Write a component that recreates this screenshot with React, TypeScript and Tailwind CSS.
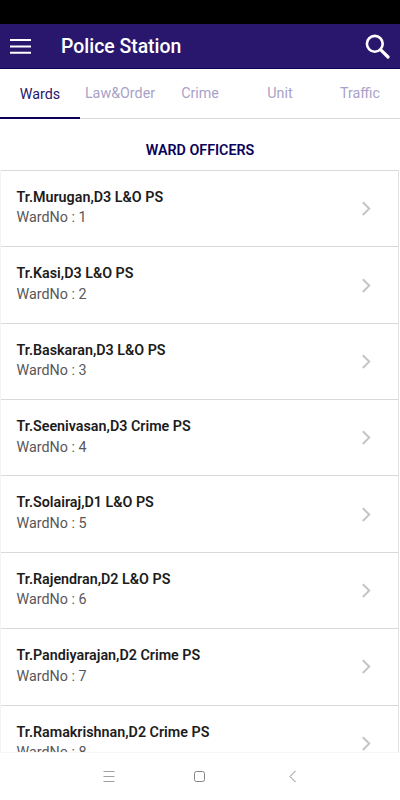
import React from 'react';
import { clsx } from 'clsx';

interface Officer {
  name: string;
  station: string;
  ward: number;
}

const tabs = ['Wards', 'Law&Order', 'Crime', 'Unit', 'Traffic'];

const officers: Officer[] = [
  { name: 'Tr.Murugan', station: 'D3 L&O PS', ward: 1 },
  { name: 'Tr.Kasi', station: 'D3 L&O PS', ward: 2 },
  { name: 'Tr.Baskaran', station: 'D3 L&O PS', ward: 3 },
  { name: 'Tr.Seenivasan', station: 'D3 Crime PS', ward: 4 },
  { name: 'Tr.Solairaj', station: 'D1 L&O PS', ward: 5 },
  { name: 'Tr.Rajendran', station: 'D2 L&O PS', ward: 6 },
  { name: 'Tr.Pandiyarajan', station: 'D2 Crime PS', ward: 7 },
  { name: 'Tr.Ramakrishnan', station: 'D2 Crime PS', ward: 8 },
];

const Header: React.FC = () => (
  <header className="flex h-[45px] shrink-0 items-center border-b border-[#0a0058] bg-[#29176e] pl-[10px] pr-[9px] text-white">
    <button aria-label="Menu" className="pt-px">
      <svg className="block h-[15px] w-[21px]" viewBox="0 0 21 15" fill="currentColor">
        <path d="M0 0h21v2H0zM0 6.4h21v2H0zM0 12.8h21v2H0z" />
      </svg>
    </button>
    <h1 className="ml-[30px] flex-1 pt-px text-[19.4px] font-medium leading-6">Police Station</h1>
    <button aria-label="Search">
      <svg className="block h-[26px] w-[26px]" viewBox="0 0 26 26" fill="none" stroke="currentColor">
        <circle cx="9.8" cy="10.8" r="7.9" strokeWidth="2.6" />
        <path d="M15.8 16.8l7.2 7.2" strokeWidth="3.2" strokeLinecap="round" />
      </svg>
    </button>
  </header>
);

const Tabs: React.FC = () => (
  <nav className="grid h-[50px] shrink-0 grid-cols-5">
    {tabs.map((tab, i) => (
      <button
        key={tab}
        className={clsx(
          'flex justify-center text-[14.3px] leading-5',
          i === 0
            ? 'border-b-2 border-[#0a0058] pt-[15px] text-[#29176e]'
            : 'border-b border-[#d9d9d9] pt-[14px] text-[#a9a2c8]'
        )}
      >
        {tab}
      </button>
    ))}
  </nav>
);

const OfficerRow: React.FC<{ officer: Officer }> = ({ officer }) => (
  <li className="flex h-[76.36px] shrink-0 items-center justify-between border-t border-[#d9d9d9] pl-[15.5px] pr-[27.5px]">
    <div className="pb-[2.5px] leading-[20.4px]">
      <p className="text-[14.3px] font-semibold text-[#1c1c1c]">
        {officer.name},{officer.station}
      </p>
      <p className="text-[14.3px] text-[#585858]">WardNo : {officer.ward}</p>
    </div>
    <svg className="h-[15px] w-[10px]" viewBox="0 0 10 15" fill="none" stroke="#c4c4c4" strokeWidth="2">
      <path d="M1.8 1.2L8.2 7.6L1.8 14" />
    </svg>
  </li>
);

const SystemNav: React.FC = () => (
  <footer className="flex h-12 shrink-0 items-center justify-between border-t border-[#f7f7f7] bg-white pb-[2px] pl-[103px] pr-[101px] text-[#858585]">
    <svg className="h-3 w-3" viewBox="0 0 12 12" stroke="#a0a0a0">
      <path d="M.5 1.5h11M.5 6.5h11M.5 11.5h11" />
    </svg>
    <svg className="mr-[2px] h-3 w-3" viewBox="0 0 12 12" fill="none" stroke="currentColor">
      <rect x=".5" y="1.5" width="10" height="10" rx="2" />
    </svg>
    <svg className="h-3 w-3" viewBox="0 0 12 12" fill="none" stroke="currentColor">
      <path d="M8.5 1l-5.5 5.5 5.5 5.5" />
    </svg>
  </footer>
);

export default function App() {
  return (
    <div className="flex h-screen flex-col overflow-hidden bg-white font-['Roboto',sans-serif]">
      <div className="h-6 shrink-0 bg-black" />
      <Header />
      <Tabs />
      <h2 className="h-[51px] shrink-0 pt-[21px] text-center text-[14.3px] font-semibold leading-5 text-[#0a0058]">
        WARD OFFICERS
      </h2>
      <ul className="mr-px flex min-h-0 flex-1 flex-col overflow-hidden border-l border-r border-l-[#f3f3f3] border-r-[#e2e2e2]">
        {officers.map((officer) => (
          <OfficerRow key={officer.ward} officer={officer} />
        ))}
      </ul>
      <SystemNav />
    </div>
  );
}
